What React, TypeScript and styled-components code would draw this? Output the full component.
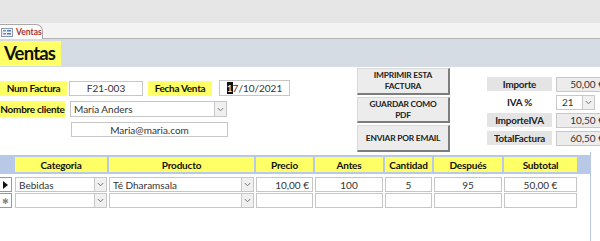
import React from 'react'
import styled, { createGlobalStyle } from 'styled-components'

const GlobalStyle = createGlobalStyle`
  html, body {
    margin: 0;
    padding: 0;
    background: #fff;
  }
  body {
    width: 600px;
    height: 241px;
    overflow: hidden;
    font-family: Lato, "Open Sans", "Liberation Sans", sans-serif;
    color: #222;
  }
`

const YELLOW = '#ffff66'

const Page = styled.div`
  width: 600px;
  display: flex;
  flex-direction: column;
`

const TopBar = styled.div`
  height: 23px;
  background: #e6e6e6;
`

const TabStrip = styled.div`
  height: 15px;
  background: #f3f3f3;
  border-bottom: 1px solid #b4b4b4;
  display: flex;
  align-items: flex-end;
`

const Tab = styled.div`
  height: 15px;
  width: 43px;
  margin-bottom: -1px;
  box-sizing: border-box;
  background: #fbfbfb;
  border: 1px solid #a9a9a9;
  border-left: none;
  border-bottom: none;
  border-top-right-radius: 7px;
  display: flex;
  align-items: center;
  gap: 3px;
  padding-left: 1px;
  font-size: 8.5px;
  font-weight: 700;
  color: #ab3434;
`

const HeaderBand = styled.div`
  height: 28px;
  background: #d6dce4;
  display: flex;
  align-items: center;
`

const Title = styled.div`
  width: 61px;
  height: 25px;
  background: ${YELLOW};
  font-size: 18.5px;
  font-weight: 700;
  letter-spacing: -0.8px;
  color: #111;
  display: flex;
  align-items: center;
  padding-left: 4px;
  box-sizing: border-box;
`

const FormArea = styled.div`
  height: 85px;
  display: flex;
  overflow: hidden;
`

const LeftFields = styled.div`
  width: 357px;
  flex-shrink: 0;
  padding-top: 13px;
  display: flex;
  flex-direction: column;
  gap: 5px;
`

const FieldRow = styled.div<{ $indent?: number }>`
  display: flex;
  align-items: center;
  padding-left: ${({ $indent }) => $indent ?? 0}px;
`

const Label = styled.div<{ $w: number; $gap?: number; $h?: number }>`
  width: ${({ $w }) => $w}px;
  height: ${({ $h }) => $h ?? 15}px;
  margin-left: ${({ $gap }) => $gap ?? 0}px;
  background: ${YELLOW};
  font-size: 10px;
  font-weight: 700;
  letter-spacing: -0.3px;
  color: #111;
  display: flex;
  align-items: center;
  justify-content: center;
  white-space: nowrap;
`

const TextBox = styled.div<{ $w: number; $gap?: number; $align?: string; $h?: number }>`
  width: ${({ $w }) => $w}px;
  height: ${({ $h }) => $h ?? 15}px;
  margin-left: ${({ $gap }) => $gap ?? 0}px;
  flex-shrink: 0;
  box-sizing: border-box;
  border: 1px solid #c6c6c6;
  background: #fff;
  font-size: 10px;
  color: #333;
  display: flex;
  align-items: center;
  justify-content: ${({ $align }) => $align ?? 'center'};
  padding: 0 3px;
  white-space: nowrap;
  overflow: hidden;
`

const Caret = styled.span`
  background: #111;
  color: #fff;
`

const DropBtn = styled.div`
  width: 12px;
  height: 100%;
  margin-left: auto;
  margin-right: -3px;
  box-sizing: border-box;
  border-left: 1px solid #c8c8c8;
  background: #f0f0f0;
  display: flex;
  align-items: center;
  justify-content: center;
  flex-shrink: 0;
`

const ButtonCol = styled.div`
  width: 93px;
  flex-shrink: 0;
  padding-top: 1px;
  display: flex;
  flex-direction: column;
  gap: 2px;
`

const ActionButton = styled.div<{ $h: number }>`
  height: ${({ $h }) => $h}px;
  box-sizing: border-box;
  background: #ececec;
  border-top: 1px solid #d9d9d9;
  border-left: 1px solid #d9d9d9;
  border-right: 2px solid #7d7d7d;
  border-bottom: 2px solid #7d7d7d;
  font-size: 8.4px;
  font-weight: 700;
  letter-spacing: -0.2px;
  color: #222;
  text-align: center;
  line-height: 11px;
  display: flex;
  align-items: center;
  justify-content: center;
  padding: 0 10px;
`

const NoWrap = styled.span`
  white-space: nowrap;
`

const Totals = styled.div`
  margin-left: 34px;
  flex-shrink: 0;
  padding-top: 10px;
  display: flex;
  flex-direction: column;
  gap: 4px;
`

const TotalRow = styled.div`
  display: flex;
  align-items: center;
  height: 14px;
`

const TotalLabel = styled.div<{ $plain?: boolean }>`
  width: 65px;
  height: 14px;
  margin-left: 3px;
  background: ${({ $plain }) => ($plain ? 'transparent' : '#e4e4e4')};
  font-size: 9.8px;
  font-weight: 700;
  letter-spacing: -0.2px;
  color: #222;
  display: flex;
  align-items: center;
  justify-content: center;
`

const TotalValue = styled.div<{ $w?: number; $white?: boolean }>`
  width: ${({ $w }) => $w ?? 52}px;
  height: 15px;
  margin-left: 4px;
  flex-shrink: 0;
  box-sizing: border-box;
  background: ${({ $white }) => ($white ? '#fff' : '#ececec')};
  border: 1px solid #c8c8c8;
  font-size: 10px;
  color: #333;
  display: flex;
  align-items: center;
  justify-content: ${({ $white }) => ($white ? 'flex-start' : 'flex-end')};
  padding: 0 3px 0 5px;
  white-space: nowrap;
`

const Subform = styled.div`
  width: 590px;
  height: 89px;
  border-right: 1px solid #b7c9e6;
  display: flex;
  flex-direction: column;
  padding-top: 3px;
`

const SubHeader = styled.div`
  height: 19px;
  background: #b7c9e6;
  display: flex;
  align-items: center;
  padding-left: 15px;
  gap: 2px;
`

const HeadCell = styled.div<{ $w: number }>`
  width: ${({ $w }) => $w}px;
  height: 15px;
  background: ${YELLOW};
  font-size: 10px;
  font-weight: 700;
  letter-spacing: -0.2px;
  color: #111;
  display: flex;
  align-items: center;
  justify-content: center;
`

const SubBody = styled.div`
  padding-top: 3px;
  display: flex;
  flex-direction: column;
  gap: 1px;
`

const DataRow = styled.div`
  display: flex;
  align-items: center;
  gap: 2px;
  height: 15px;
`

const Selector = styled.div`
  width: 12px;
  height: 15px;
  margin-right: 1px;
  box-sizing: border-box;
  border: 1px solid #9a9a9a;
  border-left: none;
  background: #fff;
  display: flex;
  align-items: center;
  justify-content: center;
  font-size: 8px;
  color: #888;
`

const Arrow = styled.div`
  width: 0;
  height: 0;
  border-top: 4px solid transparent;
  border-bottom: 4px solid transparent;
  border-left: 5px solid #111;
`

const Chevron = () => (
  <svg width="7" height="5" viewBox="0 0 7 5">
    <path d="M0.8 1 L3.5 3.8 L6.2 1" fill="none" stroke="#777" strokeWidth="1" />
  </svg>
)

const FormIcon = () => (
  <svg width="12" height="9" viewBox="0 0 12 9">
    <rect x="0.5" y="0.5" width="11" height="8" fill="#eef2f8" stroke="#8d99ad" />
    <rect x="2" y="2" width="3" height="1.5" fill="#7f8da3" />
    <rect x="6" y="2" width="4" height="1.5" fill="#4a78c0" />
    <rect x="2" y="5" width="3" height="1.5" fill="#7f8da3" />
    <rect x="6" y="5" width="4" height="1.5" fill="#4a78c0" />
  </svg>
)

type Column = { name: string; w: number; combo?: boolean; align?: string }

const columns: Column[] = [
  { name: 'Categoria', w: 92, combo: true, align: 'flex-start' },
  { name: 'Producto', w: 145, combo: true, align: 'flex-start' },
  { name: 'Precio', w: 57, align: 'flex-end' },
  { name: 'Antes', w: 68 },
  { name: 'Cantidad', w: 47 },
  { name: 'Después', w: 68 },
  { name: 'Subtotal', w: 73 },
]

const rows: string[][] = [
  ['Bebidas', 'Té Dharamsala', '10,00 €', '100', '5', '95', '50,00 €'],
  ['', '', '', '', '', '', ''],
]

const App = () => {
  return (
    <Page>
      <GlobalStyle />
      <TopBar />
      <TabStrip>
        <Tab>
          <FormIcon />
          Ventas
        </Tab>
      </TabStrip>
      <HeaderBand>
        <Title>Ventas</Title>
      </HeaderBand>
      <FormArea>
        <LeftFields>
          <FieldRow>
            <Label $w={67}>Num Factura</Label>
            <TextBox $w={74} $gap={2}>F21-003</TextBox>
            <Label $w={64} $gap={5}>Fecha Venta</Label>
            <TextBox $w={71} $gap={7} $h={16}>
              <span>
                <Caret>1</Caret>7/10/2021
              </span>
            </TextBox>
          </FieldRow>
          <FieldRow>
            <Label $w={65} $h={16}>Nombre cliente</Label>
            <TextBox $w={157} $gap={5} $h={16} $align="flex-start">
              María Anders
              <DropBtn>
                <Chevron />
              </DropBtn>
            </TextBox>
          </FieldRow>
          <FieldRow $indent={71}>
            <TextBox $w={157}>Maria@maria.com</TextBox>
          </FieldRow>
        </LeftFields>
        <ButtonCol>
          <ActionButton $h={27}>IMPRIMIR ESTA FACTURA</ActionButton>
          <ActionButton $h={27}>GUARDAR COMO PDF</ActionButton>
          <ActionButton $h={27}>
            <NoWrap>ENVIAR POR EMAIL</NoWrap>
          </ActionButton>
        </ButtonCol>
        <Totals>
          <TotalRow>
            <TotalLabel>Importe</TotalLabel>
            <TotalValue>50,00 €</TotalValue>
          </TotalRow>
          <TotalRow>
            <TotalLabel $plain>IVA %</TotalLabel>
            <TotalValue $w={39} $white>
              21
              <DropBtn>
                <Chevron />
              </DropBtn>
            </TotalValue>
          </TotalRow>
          <TotalRow>
            <TotalLabel>ImporteIVA</TotalLabel>
            <TotalValue>10,50 €</TotalValue>
          </TotalRow>
          <TotalRow>
            <TotalLabel>TotalFactura</TotalLabel>
            <TotalValue>60,50 €</TotalValue>
          </TotalRow>
        </Totals>
      </FormArea>
      <Subform>
        <SubHeader>
          {columns.map((c) => (
            <HeadCell key={c.name} $w={c.w}>
              {c.name}
            </HeadCell>
          ))}
        </SubHeader>
        <SubBody>
          {rows.map((r, i) => (
            <DataRow key={i}>
              <Selector>{i === 0 ? <Arrow /> : '✱'}</Selector>
              {columns.map((c, j) => (
                <TextBox key={c.name} $w={c.w} $align={c.align} $h={15}>
                  {r[j]}
                  {c.combo && (
                    <DropBtn>
                      <Chevron />
                    </DropBtn>
                  )}
                </TextBox>
              ))}
            </DataRow>
          ))}
        </SubBody>
      </Subform>
    </Page>
  )
}

export default App
